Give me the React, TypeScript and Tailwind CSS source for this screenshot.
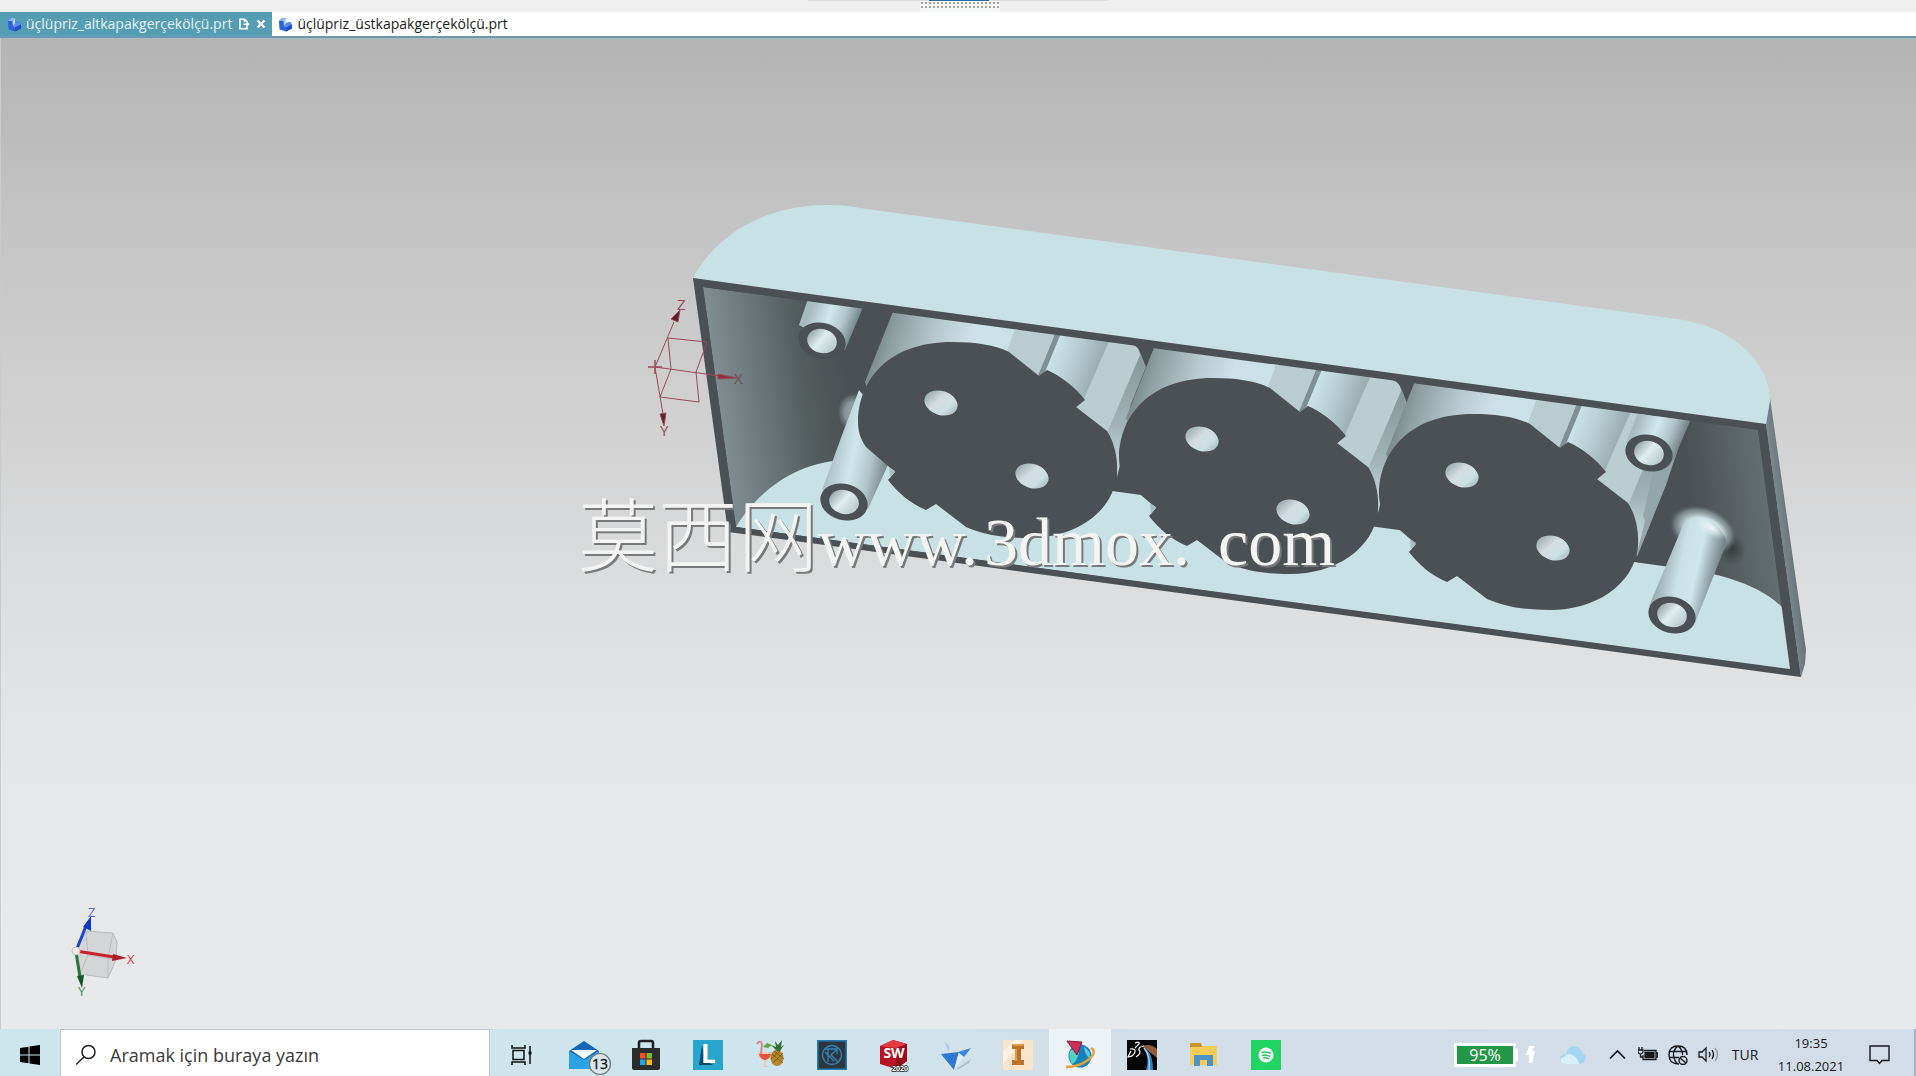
import type { ReactNode } from 'react';

type PartTab = { name: string; active: boolean };

const tabs: PartTab[] = [
  { name: 'üçlüpriz_altkapakgerçekölçü.prt', active: true },
  { name: 'üçlüpriz_üstkapakgerçekölçü.prt', active: false },
];

const DARK = '#4a5053';
const LIGHT = '#c8e1e5';

export default function App() {
  return (
    <div className="h-screen flex flex-col overflow-hidden bg-[#e8e9ea] font-['Open_Sans','Noto_Sans',sans-serif] text-[#1c1c1c]">
      <RibbonEdge />
      <TabBar />
      <Viewport />
      <Taskbar />
    </div>
  );
}

function RibbonEdge() {
  return (
    <div className="h-3 shrink-0 bg-[#efefef] flex justify-center">
      <svg width="300" height="12" viewBox="0 0 300 12" aria-hidden="true">
        <path d="M0 0.5H300" stroke="#dedede" />
        <rect x="112" y="1" width="80" height="11" fill="#f6f8fa" />
        <rect x="121" y="0" width="60" height="1" fill="#2a6a9c" />
        <path d="M113 3H192M113 7H192" stroke="#a9a39c" strokeWidth="2" strokeDasharray="2 2" />
      </svg>
    </div>
  );
}

function TabBar() {
  return (
    <div className="h-[26px] shrink-0 flex bg-white border-b-2 border-[#6f96ae]">
      {tabs.map((tab) => (
        <div
          key={tab.name}
          className={tab.active ? 'flex items-center gap-1.5 pl-[7px] pr-1.5 bg-[#549db3] text-[#e4f4f8]' : 'flex items-center gap-1 px-1.5'}
        >
          <button className="flex items-center gap-1 text-sm leading-6">
            <PartIcon />
            {tab.name}
          </button>
          {tab.active && (
            <>
              <button aria-label="Pencere">
                <svg width="12" height="12" viewBox="0 0 12 12" fill="none" stroke="#fff" strokeWidth="1.6">
                  <path d="M9 4V3.500L6.500 1.200H2V10.800H9V8.500M6.500 1.200V4M5.500 6.300H10.500M8.500 4.300L10.500 6.300L8.500 8.300" />
                </svg>
              </button>
              <button aria-label="Kapat">
                <svg width="10" height="10" viewBox="0 0 10 10" stroke="#fff" strokeWidth="2.2">
                  <path d="M1.500 1.500L8.500 8.500M8.500 1.500L1.500 8.500" />
                </svg>
              </button>
            </>
          )}
        </div>
      ))}
    </div>
  );
}

function PartIcon() {
  return (
    <svg width="15" height="15" viewBox="0 0 15 15" aria-hidden="true">
      <path d="M1 4L4 1L8 1V6L12 5L14 7.500V11.500L8 14.500L1.500 12.500Z" fill="#2c62d8" />
      <path d="M1 4L4 1L8 1L5.500 4Z" fill="#8db6f6" />
      <path d="M5.500 4L8 1V6.500L6 9.500Z" fill="#bcd6ff" />
      <path d="M6 9.500L8 6.200L12 5L14 7.500L8 10.500Z" fill="#5c8ff0" />
      <path d="M8 10.500L14 7.500V11.500L8 14.500Z" fill="#1f4fc4" />
    </svg>
  );
}

function Viewport() {
  return (
    <main className="flex-1 min-h-0 border-l border-t border-l-[#c9cccd] border-t-[#a6bcc8] bg-[linear-gradient(180deg,#b4b4b4_0%,#c5c5c6_20%,#d1d1d2_38%,#dedfe0_58%,#e6e7e8_76%,#e8e9ea_100%)]">
      <svg className="block w-full h-full" viewBox="1 39 1915 990" preserveAspectRatio="xMidYMid slice">
        <Defs />
        <Housing />
        <CoordinateSystem />
        <ViewTriad />
        <Watermark />
      </svg>
    </main>
  );
}

function Defs() {
  return (
    <defs>
      <linearGradient id="leftWall" gradientUnits="userSpaceOnUse" x1="712" y1="410" x2="848" y2="392">
        <stop offset="0" stopColor="#839295" />
        <stop offset="0.35" stopColor="#6b787b" />
        <stop offset="0.7" stopColor="#535c5d" />
        <stop offset="1" stopColor={DARK} />
      </linearGradient>
      <linearGradient id="rightWall" gradientUnits="userSpaceOnUse" x1="1695" y1="520" x2="1775" y2="509">
        <stop offset="0" stopColor={DARK} />
        <stop offset="1" stopColor="#667172" />
      </linearGradient>
      <linearGradient id="outerSide" gradientUnits="userSpaceOnUse" x1="1776" y1="530" x2="1792" y2="528">
        <stop offset="0" stopColor="#7f9093" />
        <stop offset="1" stopColor="#657274" />
      </linearGradient>
      <linearGradient id="barrel" gradientUnits="userSpaceOnUse" x1="1135" y1="365" x2="1265" y2="405">
        <stop offset="0" stopColor="#718082" />
        <stop offset="0.15" stopColor="#8e9fa2" />
        <stop offset="0.45" stopColor="#b7cace" />
        <stop offset="0.7" stopColor="#cde0ea" />
        <stop offset="1" stopColor="#c9e2e6" />
      </linearGradient>
      <linearGradient id="notch" gradientUnits="userSpaceOnUse" x1="1315" y1="385" x2="1358" y2="400">
        <stop offset="0" stopColor="#c9e3e8" />
        <stop offset="0.5" stopColor="#b7cdd1" />
        <stop offset="1" stopColor="#9db1b4" />
      </linearGradient>
      <linearGradient id="flank" gradientUnits="userSpaceOnUse" x1="1395" y1="400" x2="1378" y2="505">
        <stop offset="0" stopColor="#8a9b9e" />
        <stop offset="0.6" stopColor="#a2b4b7" />
        <stop offset="1" stopColor="#c4d8dc" />
      </linearGradient>
      <linearGradient id="peg" x1="0" y1="0.35" x2="1" y2="0.65">
        <stop offset="0.12" stopColor="#a8bbbf" />
        <stop offset="0.42" stopColor="#d0e8ed" />
        <stop offset="0.65" stopColor="#b0c5c9" />
        <stop offset="0.9" stopColor="#66767a" />
      </linearGradient>
      <linearGradient id="pegBright" x1="0" y1="0.35" x2="1" y2="0.65">
        <stop offset="0.15" stopColor="#98abae" />
        <stop offset="0.4" stopColor="#c9e2e7" />
        <stop offset="0.6" stopColor="#cfe7ec" />
        <stop offset="0.85" stopColor="#76878a" />
      </linearGradient>
      <linearGradient id="bore" x1="0" y1="0.3" x2="1" y2="0.7">
        <stop offset="0" stopColor="#95a6a9" />
        <stop offset="0.45" stopColor="#e0eef0" />
        <stop offset="1" stopColor="#b5c8cb" />
      </linearGradient>
      <linearGradient id="pin" x1="0" y1="0.3" x2="1" y2="0.7">
        <stop offset="0.05" stopColor="#9fb2b6" />
        <stop offset="0.4" stopColor="#d3dde0" />
        <stop offset="0.75" stopColor="#cbe0e4" />
        <stop offset="1" stopColor="#a9bbbf" />
      </linearGradient>
      <radialGradient id="glow">
        <stop offset="0" stopColor="#e3f3f5" />
        <stop offset="0.5" stopColor="#c9dcdf" />
        <stop offset="0.8" stopColor="#87979a" stopOpacity="0.7" />
        <stop offset="1" stopColor={DARK} stopOpacity="0" />
      </radialGradient>
      <radialGradient id="highlight">
        <stop offset="0" stopColor="#f2fbfc" />
        <stop offset="1" stopColor="#d6ecf0" stopOpacity="0" />
      </radialGradient>
      <radialGradient id="pegShadow">
        <stop offset="0" stopColor="#363d3f" />
        <stop offset="1" stopColor="#363d3f" stopOpacity="0" />
      </radialGradient>
      <clipPath id="opening">
        <path d="M703 287L1758 430L1790 669L736 527Z" />
      </clipPath>
    </defs>
  );
}

function Housing() {
  return (
    <g>
      {/* outer shell */}
      <path d="M1770 398L1806 650L1805 664L1801 677L1766 424Z" fill="url(#outerSide)" />
      <path
        d="M693 278C702 260 718 243 737 230C765 212 800 204 830 205C841 205 850 206 860 208L1677 319C1706 323 1729 334 1744 348C1762 364 1770 384 1770 400L1766 424Z"
        fill={LIGHT}
      />
      <path d="M693 278L1766 424L1801 677L728 532Z" fill={DARK} />

      <g clipPath="url(#opening)">
        <path d="M703 287L850 307V470L736 527Z" fill="url(#leftWall)" />
        <path d="M1680 410L1758 430L1790 669L1680 600Z" fill="url(#rightWall)" />
        <path d="M736 527C754 497 792 460 850 460L1112 491L1663 566C1715 572 1757 582 1783 608L1791 670Z" fill={LIGHT} />
        <ellipse cx="853" cy="412" rx="16" ry="20" fill="url(#glow)" opacity="0.5" />
        <path d="M859 390L900 440L887 467L868 509L822 490L845 427Z" fill="url(#peg)" />
        <path d="M1669 380L1681 440L1666 485L1637 557L1628 503L1640 450Z" fill="#93a6a9" />
        <Socket dx={-261} dy={-36} />
        <Socket dx={0} dy={0} />
        <Socket dx={260} dy={36} />
        <path d="M808 299L864 305L845 350L799 325Z" fill="url(#peg)" />
        <path d="M1638 412L1691 419L1673 461L1626 443Z" fill="url(#peg)" />
        <ellipse cx="1732" cy="549" rx="14" ry="16" fill="url(#pegShadow)" />
        <ellipse cx="1703" cy="530" rx="36" ry="24" transform="rotate(20 1703 530)" fill="url(#glow)" />
        <path d="M1681 530C1688 512 1718 514 1727 542L1695 623L1649 606Z" fill="url(#pegBright)" />
        <ellipse cx="1712" cy="528" rx="18" ry="9" transform="rotate(30 1712 528)" fill="url(#highlight)" />
      </g>

      <PegEnd x={822} y={341} />
      <PegEnd x={844} y={502} />
      <PegEnd x={1649} y={453} />
      <PegEnd x={1672} y={615} />
    </g>
  );
}

function Socket({ dx, dy }: { dx: number; dy: number }) {
  return (
    <g transform={`translate(${dx} ${dy})`}>
      <path d="M1401 388L1407 403L1392 440L1383 480L1385 485L1378 513L1374 480L1368 467Z" fill="url(#flank)" />
      <path d="M1155 345L1280 362L1270 392L1130 430L1126 418Z" fill="url(#barrel)" />
      <path d="M1277 362L1317 368L1300 414L1266 392Z" fill="#b9cdd1" />
      <path d="M1317 368L1322 369L1307 408L1298 414Z" fill="#7d9093" />
      <path d="M1322 369L1371 375L1346 440L1306 408Z" fill="url(#notch)" />
      <path d="M1371 375L1388 379C1396 380 1401 384 1401 391L1368 469L1335 445L1344 437Z" fill="#bacdd1" />
      <path
        d="M1119 457C1120 415 1150 378 1213 378C1237 378 1256 381 1270 388L1300 412L1308 406C1322 412 1337 424 1346 436L1337 443L1368 467C1376 480 1379 495 1378 510C1374 550 1334 574 1290 574C1265 574 1246 571 1227 563L1197 540L1187 546C1172 540 1159 529 1149 516L1156 508L1127 483C1121 474 1119 467 1119 457Z"
        fill={DARK}
      />
      <path d="M1151 514L1156 507L1150 503Z" fill="#a9bec2" />
      <ellipse cx="1202" cy="439" rx="17" ry="12" transform="rotate(18 1202 439)" fill="url(#pin)" />
      <ellipse cx="1293" cy="512" rx="17" ry="12" transform="rotate(18 1293 512)" fill="url(#pin)" />
    </g>
  );
}

function PegEnd({ x, y }: { x: number; y: number }) {
  return (
    <g transform={`translate(${x} ${y}) rotate(15)`}>
      <ellipse rx="24" ry="18" fill={DARK} />
      <ellipse rx="15" ry="12" fill="url(#bore)" />
    </g>
  );
}

function CoordinateSystem() {
  return (
    <g fill="none" stroke="#9a4a58" strokeWidth="1" className="text-[15px]">
      <path d="M655 367L674 322M655 367L720 376M655 367L663 414" />
      <path d="M668 338L707 342L696 372L699 402L660 397L671 369Z" />
      <path d="M648 367H662M655 360V374" strokeWidth="1.500" />
      <path d="M680 310L671 319L678 322Z" fill="#5c1f2c" />
      <path d="M737 378L718 374V379Z" fill="#8c2d3b" />
      <path d="M664 426L660 414L666 413Z" fill="#5c1f2c" />
      <g fill="#9a4a58" stroke="none">
        <text x="677" y="310">Z</text>
        <text x="734" y="384" fill="#6c5054">X</text>
        <text x="660" y="436">Y</text>
      </g>
    </g>
  );
}

function ViewTriad() {
  return (
    <g className="text-[13px]">
      <path d="M86 931L113 933L117 942L116 960L108 978L80 974L76 951Z" fill="#d3d5d6" stroke="#b9bbbc" />
      <path d="M86 931L88 955L80 974M88 955L116 960M113 933L108 958L108 978" fill="none" stroke="#bcbebf" />
      <path d="M76 951L86 926" stroke="#1b45d8" strokeWidth="3" />
      <path d="M91 916L91 931L83 927Z" fill="#1438c9" />
      <path d="M76 951L114 957" stroke="#c8242d" strokeWidth="3" />
      <path d="M127 958L112 961L113 954Z" fill="#a81f28" />
      <path d="M76 952L80 977" stroke="#27763a" strokeWidth="3" />
      <path d="M82 988L77 976L84 975Z" fill="#165526" />
      <circle cx="76" cy="951" r="4" fill="#f0e9e6" stroke="#c9c3c0" />
      <text x="88" y="917" fill="#5560dc">Z</text>
      <text x="127" y="964" fill="#cf3f48">X</text>
      <text x="78" y="996" fill="#4b8a57">Y</text>
    </g>
  );
}

function Watermark() {
  return (
    <g className="fill-[#f4f4f2] [filter:drop-shadow(2px_2px_0_#77797a)]">
      <text x="578" y="565" className="text-[80px] font-light font-['Noto_Sans_CJK_SC',sans-serif]">莫西网</text>
      <text y="565" className="text-[68px] font-['Liberation_Serif','Noto_Sans_CJK_SC',serif]">
        <tspan x="818">www.</tspan>
        <tspan x="984">3dmox.</tspan>
        <tspan x="1218">com</tspan>
      </text>
    </g>
  );
}

function Taskbar() {
  return (
    <footer className="h-[47px] shrink-0 flex bg-[linear-gradient(90deg,#cde6ee_0%,#cfe5ed_40%,#d2dfe9_60%,#d3dce9_100%)]">
      <button aria-label="Başlat" className="w-[60px] pt-1 flex items-center justify-center">
        <svg width="20" height="20" viewBox="0 0 20 20">
          <path d="M0 3L8.500 1.700V9.500H0ZM9.500 1.500L20 0V9.500H9.500ZM0 10.500H8.500V18.300L0 17ZM9.500 10.500H20V20L9.500 18.500Z" />
        </svg>
      </button>
      <label className="w-[430px] flex items-center gap-3 pl-[15px] pt-1 bg-white border border-b-0 border-[#b9c8ce]">
        <svg width="22" height="22" viewBox="0 0 22 22" fill="none" stroke="#222" strokeWidth="1.500">
          <circle cx="12.500" cy="8" r="6.500" />
          <path d="M8 13L0 20.500" />
        </svg>
        <input
          aria-label="Ara"
          placeholder="Aramak için buraya yazın"
          className="min-w-0 flex-1 bg-transparent text-lg leading-6 outline-none placeholder:text-[#3a3a3a]"
        />
      </label>
      <button aria-label="Görev görünümü" className="w-[63px] pt-1 flex items-center justify-center">
        <svg width="22" height="20" viewBox="0 0 22 20" fill="none" stroke="#111" strokeWidth="1.500">
          <path d="M1 0V3H14V0M1 20V17H14V20M2 5.500H13V14.500H2ZM19 1V19" />
          <path d="M17.500 8H20.500" strokeWidth="3" />
        </svg>
      </button>
      <nav className="flex">
        <AppButton label="Posta"><MailIcon /></AppButton>
        <AppButton label="Microsoft Store"><StoreIcon /></AppButton>
        <AppButton label="L"><LetterLIcon /></AppButton>
        <AppButton label="Kokteyl"><CocktailIcon /></AppButton>
        <AppButton label="KeyShot"><KeyIcon /></AppButton>
        <AppButton label="SolidWorks"><SolidIcon /></AppButton>
        <AppButton label="Kuş"><BirdIcon /></AppButton>
        <AppButton label="Inventor"><InventorIcon /></AppButton>
        <AppButton label="NX" active><NxIcon /></AppButton>
        <AppButton label="3DS"><DassaultIcon /></AppButton>
        <AppButton label="Dosya Gezgini"><FolderIcon /></AppButton>
        <AppButton label="Spotify"><SpotifyIcon /></AppButton>
      </nav>
      <Tray />
    </footer>
  );
}

function AppButton({ label, active, children }: { label: string; active?: boolean; children: ReactNode }) {
  return (
    <button
      aria-label={label}
      className={active ? 'w-[62px] pt-1 flex items-center justify-center bg-[#ecf2f6]' : 'w-[62px] pt-1 flex items-center justify-center'}
    >
      <svg width="30" height="30" viewBox="0 0 30 30" className="overflow-visible">
        {children}
      </svg>
    </button>
  );
}

function MailIcon() {
  return (
    <>
      <path d="M0 11L15 1L30 11V29H0Z" fill="#1465b8" />
      <path d="M0 11L15 20L30 11V29H0Z" fill="#2aa3e4" />
      <path d="M2 10H28L15 19Z" fill="#f5fafd" />
      <circle cx="31" cy="24" r="10.500" fill="#dbe5ea" stroke="#6e7477" strokeWidth="1.200" />
      <text x="31" y="29" textAnchor="middle" className="text-sm" fill="#111" stroke="#111" strokeWidth="0.300">13</text>
    </>
  );
}

function StoreIcon() {
  return (
    <>
      <path d="M8 9V3Q8 1 10 1H20Q22 1 22 3V9" fill="none" stroke="#222" strokeWidth="2.600" />
      <path d="M1 8H29V28Q29 30 27 30H3Q1 30 1 28Z" fill="#2c2c2c" />
      <rect x="9" y="13" width="5.500" height="5.500" fill="#ee5228" />
      <rect x="15.500" y="13" width="5.500" height="5.500" fill="#7fba27" />
      <rect x="9" y="19.500" width="5.500" height="5.500" fill="#25a4e6" />
      <rect x="15.500" y="19.500" width="5.500" height="5.500" fill="#fbb916" />
    </>
  );
}

function LetterLIcon() {
  return (
    <>
      <rect width="30" height="30" fill="#27a5cd" />
      <path d="M9 5L6 25L20 25L12 20Z" fill="#134766" />
      <text x="8" y="23" className="text-[26px] font-bold" fill="#fff">L</text>
    </>
  );
}

function CocktailIcon() {
  return (
    <>
      <path d="M3 12H17Q16 20 11 21V26H14V27H7V26H9V21Q4 19 3 12Z" fill="#e9c9bd" />
      <path d="M4 14H16Q15 19 10 20Q5 19 4 14Z" fill="#e4533c" />
      <path d="M2 4Q5 -1 7 4L6 14" fill="none" stroke="#e0868a" strokeWidth="2" />
      <path d="M8 7L12 3L17 5L13 8Z" fill="#5caa3f" />
      <ellipse cx="22" cy="18" rx="6.500" ry="8" fill="#b5872b" />
      <path d="M17 14L28 23M19 11L29 19M28 13L18 23M25 11L16 19" stroke="#735519" strokeWidth="0.800" />
      <path d="M22 11L16 5L21 7L20 1L23 5L27 0L26 7L29 5L25 11Z" fill="#307233" />
    </>
  );
}

function KeyIcon() {
  return (
    <>
      <rect x="0.750" y="0.750" width="28.500" height="28.500" fill="#30363d" stroke="#237fb5" strokeWidth="1.500" />
      <g fill="none" stroke="#3185ba" strokeWidth="1.300">
        <circle cx="15" cy="15" r="9.500" />
        <path d="M8 9H20L14 15L21 22M11 9V22M20 9V14M8 12L17 21" />
      </g>
    </>
  );
}

function SolidIcon() {
  return (
    <>
      <path d="M1 6L14 0L28 4V21L17 29L1 24Z" fill="#b71322" />
      <path d="M1 6L14 0L28 4L17 8Z" fill="#e43c42" />
      <path d="M17 8L28 4V21L17 29Z" fill="#9b0c1a" />
      <text x="15" y="18" textAnchor="middle" className="text-[14px] font-bold" fill="#fff">SW</text>
      <text x="21" y="31" textAnchor="middle" className="text-[7px] font-bold" fill="#fff" stroke="#222" strokeWidth="1.500" paintOrder="stroke">2020</text>
    </>
  );
}

function BirdIcon() {
  return (
    <>
      <path d="M15 29L30 19L28 23L18 29Z" fill="#b4bfc8" />
      <path d="M3 1L8 6V12Z" fill="#a8c7e2" />
      <path d="M0 14L18 12L13 30Z" fill="#2e78d2" />
      <path d="M18 12L25 14L13 30Z" fill="#e1ecf7" />
      <path d="M17 12L30 8L23 17Z" fill="#3d88dc" />
    </>
  );
}

function InventorIcon() {
  return (
    <>
      <rect width="30" height="30" fill="#fbe4cc" />
      <path d="M0 12L12 0H20L0 24Z" fill="#fff1e2" />
      <path d="M9 4H21V9H18V20H21V25H9V20H12V9H9Z" fill="#b9732a" />
      <path d="M9 4H21L20 6H10ZM12 9H14V21H12Z" fill="#dd9b4b" />
    </>
  );
}

function NxIcon() {
  return (
    <>
      <circle cx="15" cy="16" r="11.500" fill="#1681bd" />
      <path d="M5 11Q9 7 14 12Q12 22 7 24Q3 18 5 11Z" fill="#50d3c5" />
      <path d="M19 7Q26 11 25 18Q20 16 19 7Z" fill="#64c5dc" />
      <path d="M26 8Q33 12 23 20Q14 27 1 27" fill="none" stroke="#e7a334" strokeWidth="2.500" />
      <path d="M2 1L17 2L12 15Z" fill="#ca3156" stroke="#94183a" />
    </>
  );
}

function DassaultIcon() {
  return (
    <>
      <rect width="30" height="30" fill="#050608" />
      <path d="M15 6Q24 3 30 9V18Q24 13 15 6Z" fill="#8f5a3a" />
      <path d="M16 7Q26 12 26 30H19Q23 17 16 7Z" fill="#2f83c0" />
      <path d="M17 8Q24 16 22 30" fill="none" stroke="#a5d8fa" strokeWidth="1.300" />
      <path d="M8 3Q13 1 12 4L8 8M3 9Q9 8 8 12Q6 17 1 17L4 11M17 6Q11 7 12 10Q15 13 9 17" fill="none" stroke="#fff" strokeWidth="1.200" />
    </>
  );
}

function FolderIcon() {
  return (
    <>
      <path d="M1 4Q1 3 2 3H11L13 6H27Q28 6 28 8V25H1Z" fill="#f8cc59" />
      <path d="M1 4Q1 3 2 3H12L13 7H1Z" fill="#ca942b" />
      <path d="M5 26V15H24V26H18V20H11V26Z" fill="#4d93c4" />
    </>
  );
}

function SpotifyIcon() {
  return (
    <>
      <rect width="30" height="30" fill="#20d561" />
      <circle cx="15" cy="15" r="7.500" fill="#fff" />
      <path d="M10.500 12.500Q15 11 20 13.500M11 15.500Q15 14 19 16.500M12 18Q15 17 18 19" fill="none" stroke="#20c45a" strokeWidth="1.500" />
    </>
  );
}

function Tray() {
  return (
    <div className="ml-auto pt-1 flex items-center text-[#16181b]">
      <div className="w-[62px] h-6 border-[3px] border-white bg-[#239746] text-white text-base leading-[18px] text-center">95%</div>
      <div className="w-0.5 h-3 mr-2 bg-white" />
      <svg width="9" height="18" viewBox="0 0 9 18" className="mr-6" fill="#fff">
        <path d="M3 0H9L6 5H9L6 17H3V9H0Z" />
      </svg>
      <svg width="28" height="20" viewBox="0 0 28 20" className="mr-[22px]">
        <path d="M6 19Q0 19 1 13Q2 9 7 9Q9 1 16 1Q22 2 23 8Q28 10 26 15Q25 19 20 19Z" fill="#a5d6f1" />
        <path d="M2 18Q0 13 5 12Q8 7 13 10Q19 12 20 19H6Z" fill="#d9effa" />
      </svg>
      <button aria-label="Gizli simgeler" className="mr-3">
        <svg width="17" height="11" viewBox="0 0 17 11" fill="none" stroke="currentColor" strokeWidth="1.700"><path d="M1 9.500L8.500 2L16 9.500" /></svg>
      </button>
      <button aria-label="Pil" className="mr-2.5">
        <svg width="20" height="15" viewBox="0 0 20 15" fill="none" stroke="currentColor" strokeWidth="1.300">
          <path d="M6 3.500H18V12.500H5V8M18 6H19.500V10H18M1 0V3M4 0V3M0 3H5V5Q4 7 2.500 7Q1 7 0 5ZM2.500 7V10H5" />
          <path d="M7 5.500H16V10.500H7Z" fill="currentColor" />
        </svg>
      </button>
      <button aria-label="Ağ" className="mr-2.5">
        <svg width="20" height="20" viewBox="0 0 20 20" fill="none" stroke="currentColor" strokeWidth="1.400">
          <path d="M11 19Q1 19 1 10Q1 1 10 1Q19 1 19 10M10 1Q5 5 5.500 10Q6 16 10 19M10 1Q15 5 14.500 10M2 6.500H18M1 12.500H11" />
          <circle cx="15" cy="15.500" r="4" />
          <path d="M12 13L18 18" />
        </svg>
      </button>
      <button aria-label="Ses" className="mr-3">
        <svg width="21" height="17" viewBox="0 0 21 17" fill="none" stroke="currentColor" strokeWidth="1.300">
          <path d="M1 6H4L8 2V15L4 11H1ZM11 6Q13 8.500 11 11M14 4Q17 8.500 14 13" />
          <path d="M17 2Q22 8.500 17 15" stroke="#8c949c" />
        </svg>
      </button>
      <button className="w-7 mr-3.5 text-sm">TUR</button>
      <button className="w-[76px] mr-5 text-[13px] leading-[23px] text-center">
        <span className="block">19:35</span>
        <span className="block">11.08.2021</span>
      </button>
      <button aria-label="Bildirimler" className="mr-6">
        <svg width="21" height="20" viewBox="0 0 21 20" fill="none" stroke="currentColor" strokeWidth="1.400">
          <path d="M1 1H20V15.500H13L10.500 18.500L8 15.500H1Z" />
        </svg>
      </button>
      <div className="w-0.5 self-stretch -mt-1 bg-[#a5b2c4]" />
    </div>
  );
}
